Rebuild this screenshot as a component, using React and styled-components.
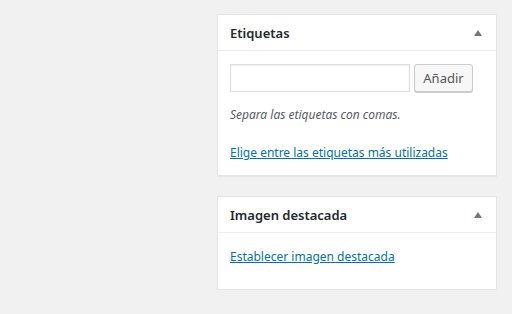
import React from 'react';
import styled, { createGlobalStyle } from 'styled-components';

const GlobalStyle = createGlobalStyle`
  html, body {
    margin: 0;
    padding: 0;
    background: #f1f1f1;
    font-family: "Noto Sans", "Open Sans", sans-serif;
    font-size: 12px;
    color: #23282d;
  }
`;

const Sidebar = styled.div`
  width: 280px;
  margin: 14px 0 0 217px;
  display: flex;
  flex-direction: column;
  gap: 20px;
`;

const Box = styled.div`
  background: #fff;
  border: 1px solid #e5e5e5;
  box-shadow: 0 1px 1px rgba(0, 0, 0, 0.04);
`;

const BoxHeader = styled.div`
  display: flex;
  align-items: center;
  justify-content: space-between;
  height: 35px;
  padding: 0 14px 0 12px;
  border-bottom: 1px solid #eee;
`;

const BoxTitle = styled.h2`
  margin: 0;
  font-size: 13px;
  font-weight: 600;
  color: #23282d;
`;

const Toggle = styled.span`
  width: 0;
  height: 0;
  border-left: 4px solid transparent;
  border-right: 4px solid transparent;
  border-bottom: 6px solid #72777c;
`;

const BoxBody = styled.div`
  padding: ${(p) => p.$pad || '13px 12px 12px'};
`;

const AddRow = styled.div`
  display: flex;
  gap: 4px;
`;

const TagInput = styled.input`
  width: 180px;
  height: 28px;
  box-sizing: border-box;
  border: 1px solid #ddd;
  box-shadow: inset 0 1px 2px rgba(0, 0, 0, 0.07);
  margin: 0;
`;

const Button = styled.button`
  width: 59px;
  height: 28px;
  box-sizing: border-box;
  padding: 0;
  border: 1px solid #ccc;
  border-radius: 3px;
  background: #f7f7f7;
  box-shadow: 0 1px 0 #ccc;
  color: #555;
  font-family: inherit;
  font-size: 13px;
`;

const Hint = styled.p`
  margin: 13px 0 0;
  font-style: italic;
  color: #555d66;
  line-height: 20px;
`;

const BoxLink = styled.a`
  display: inline-block;
  margin-top: ${(p) => p.$top || 0}px;
  color: #0073aa;
  text-decoration: underline;
  line-height: 20px;
`;

export default function App() {
  return (
    <>
      <GlobalStyle />
      <Sidebar>
        <Box>
          <BoxHeader>
            <BoxTitle>Etiquetas</BoxTitle>
            <Toggle />
          </BoxHeader>
          <BoxBody>
            <AddRow>
              <TagInput type="text" />
              <Button>Añadir</Button>
            </AddRow>
            <Hint>Separa las etiquetas con comas.</Hint>
            <BoxLink href="#" $top={18}>Elige entre las etiquetas más utilizadas</BoxLink>
          </BoxBody>
        </Box>
        <Box>
          <BoxHeader>
            <BoxTitle>Imagen destacada</BoxTitle>
            <Toggle />
          </BoxHeader>
          <BoxBody $pad="14px 12px 22px">
            <BoxLink href="#">Establecer imagen destacada</BoxLink>
          </BoxBody>
        </Box>
      </Sidebar>
    </>
  );
}
